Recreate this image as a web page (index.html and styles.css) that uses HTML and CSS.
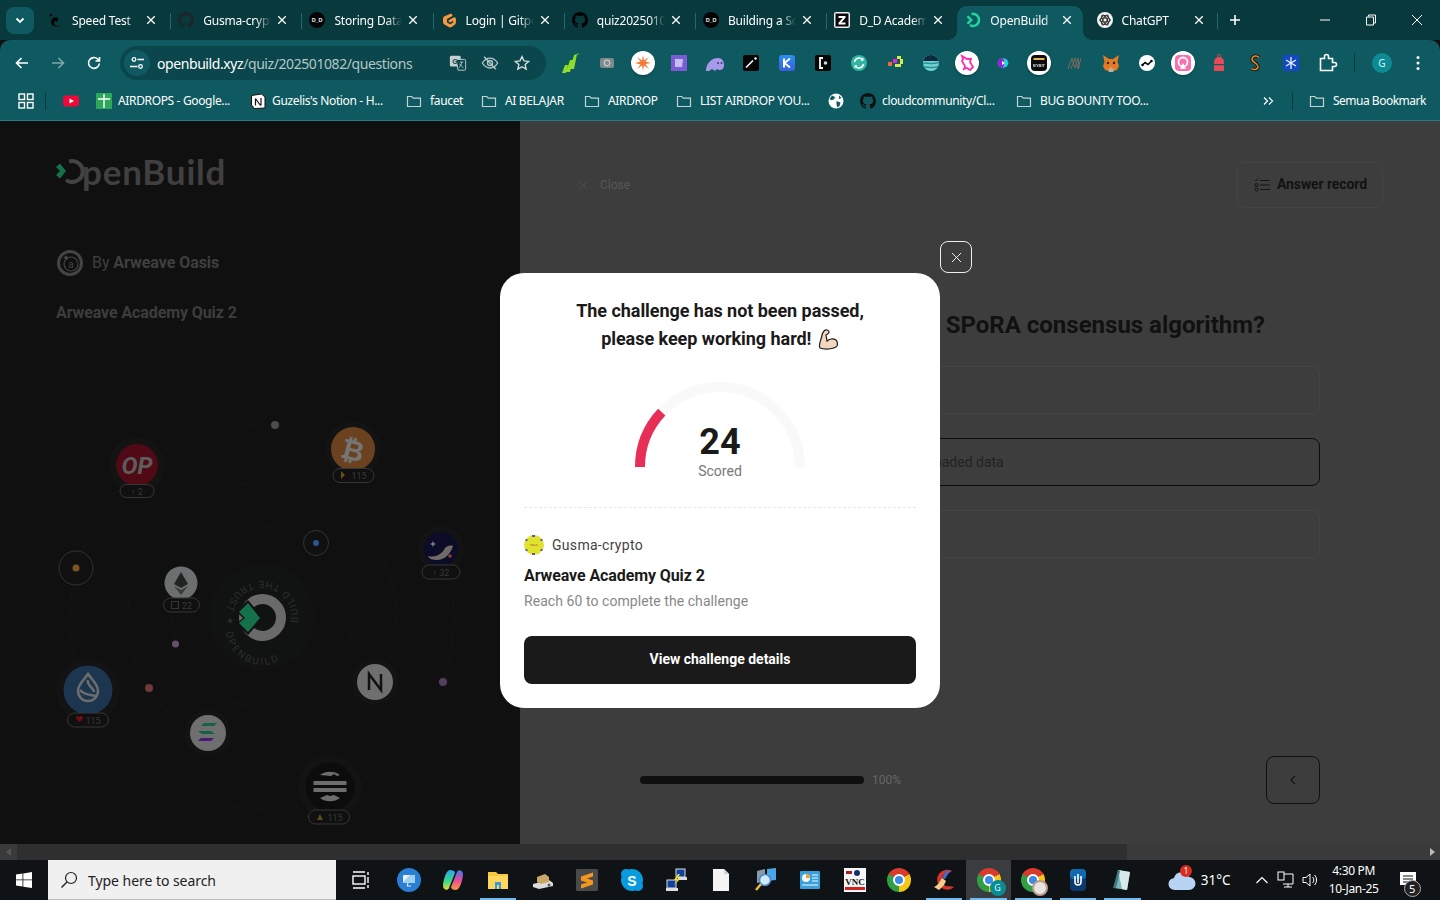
FILE: index.html
```html
<!DOCTYPE html>
<html lang="en">
<head>
<meta charset="utf-8">
<title>OpenBuild</title>
<link rel="stylesheet" href="styles.css">
</head>
<body>
<svg class="defs" width="0" height="0" aria-hidden="true">
  <symbol id="x" viewBox="0 0 12 12"><path d="M1.500 1.500l9 9M10.500 1.500l-9 9" fill="none" stroke="currentColor" stroke-width="1.600"/></symbol>
  <symbol id="xthin" viewBox="0 0 12 12"><path d="M1 1l10 10M11 1L1 11" fill="none" stroke="currentColor" stroke-width="1"/></symbol>
  <symbol id="folder" viewBox="0 0 16 16"><path d="M1.500 3.500h4.200l1.600 1.700h7.200v8.300h-13z" fill="none" stroke="#c4d2d3" stroke-width="1.200"/></symbol>
  <symbol id="gh" viewBox="0 0 16 16"><path fill="currentColor" d="M8 0C3.580 0 0 3.580 0 8c0 3.540 2.290 6.530 5.470 7.590.4.07.55-.17.55-.38 0-.19-.01-.82-.01-1.490-2.010.37-2.530-.49-2.690-.94-.09-.23-.48-.94-.82-1.130-.28-.15-.68-.52-.01-.53.63-.01 1.080.58 1.230.82.72 1.210 1.870.87 2.330.66.07-.52.28-.87.51-1.070-1.780-.2-3.640-.89-3.640-3.950 0-.87.31-1.590.82-2.150-.08-.2-.36-1.020.08-2.120 0 0 .67-.21 2.200.82.64-.18 1.320-.27 2-.27.68 0 1.360.09 2 .27 1.530-1.040 2.200-.82 2.200-.82.44 1.100.16 1.920.08 2.120.51.56.82 1.270.82 2.150 0 3.070-1.870 3.750-3.650 3.950.29.25.54.73.54 1.480 0 1.070-.01 1.930-.01 2.200 0 .21.15.46.55.38A8.013 8.013 0 0016 8c0-4.420-3.580-8-8-8z"/></symbol>
  <symbol id="dd" viewBox="0 0 16 16"><circle cx="8" cy="8" r="8" fill="#050505"/><text x="8" y="10.300" class="ddt">D_D</text></symbol>
  <symbol id="ob" viewBox="0 0 30 26"><path d="M13 3.500a10.500 10.500 0 1 1 -3 18.500" fill="none" stroke="currentColor" stroke-width="4"/><path d="M0 9l4-3.500 6 7.500-6 7.500-4-3.500 4-4z" fill="#14714a"/></symbol>
</svg>

<div class="tabstrip">
  <div class="tabmenu"><svg width="12" height="12" viewBox="0 0 12 12"><path d="M2.500 4.500L6 8l3.500-3.500" fill="none" stroke="#fff" stroke-width="1.800"/></svg></div>
  <div class="tab"><svg class="fav" viewBox="0 0 16 16"><path d="M4 1.500l1.500 1.500-1.500 1.500-1.500-1.500zM9 5C5 6 3.500 9 4.500 12c1 2.500 5 3 9 1.500-3 .5-6 .5-6.500-2C6.500 9 9 8 10 10c2-2 1-5.500-1-5z" fill="#020404"/></svg><span class="tabtitle">Speed Test</span><svg class="tabx"><use href="#x"/></svg></div>
  <div class="tab sep"><svg class="fav favgh dim"><use href="#gh"/></svg><span class="tabtitle">Gusma-crypto</span><svg class="tabx"><use href="#x"/></svg></div>
  <div class="tab sep"><svg class="fav"><use href="#dd"/></svg><span class="tabtitle">Storing Data</span><svg class="tabx"><use href="#x"/></svg></div>
  <div class="tab sep"><svg class="fav" viewBox="0 0 16 16"><path d="M9.500 1.800a1.500 1.500 0 0 1 1.500 2.500L6 7.100v3.400l3.200 1.800 3-1.700V8.800l-2.700 1.500a1.400 1.400 0 0 1-1.400-2.400l4.400-2.500a1.600 1.600 0 0 1 2.400 1.300v3.800a2.900 2.900 0 0 1-1.500 2.500L10.600 15a2.900 2.900 0 0 1-2.900 0l-4.200-2.400A2.900 2.900 0 0 1 2 10V6.700a2.900 2.900 0 0 1 1.500-2.500z" fill="#f79a3e"/></svg><span class="tabtitle">Login | Gitpod</span><svg class="tabx"><use href="#x"/></svg></div>
  <div class="tab sep"><svg class="fav favgh"><use href="#gh"/></svg><span class="tabtitle">quiz202501082</span><svg class="tabx"><use href="#x"/></svg></div>
  <div class="tab sep"><svg class="fav"><use href="#dd"/></svg><span class="tabtitle">Building a Solid</span><svg class="tabx"><use href="#x"/></svg></div>
  <div class="tab sep"><svg class="fav" viewBox="0 0 16 16"><rect width="16" height="16" rx="2" fill="#eee"/><rect x="1.500" y="1.500" width="13" height="13" fill="#0a0a0a"/><path d="M4.500 4h7v1.800L7.300 10.500h4.200V12.500h-7v-1.800l4.200-4.700H4.500z" fill="#fff"/></svg><span class="tabtitle">D_D Academy</span><svg class="tabx"><use href="#x"/></svg></div>
  <div class="tab active"><svg class="fav favob" viewBox="0 0 16 16"><path d="M6.500 2.100a6 6 0 1 1-1.500 11" fill="none" stroke="#22d3a0" stroke-width="2.500"/><path d="M1.500 5l2-1.500L8 8l-4.500 4.500L1.500 11l3-3z" fill="#22d3a0"/></svg><span class="tabtitle">OpenBuild</span><svg class="tabx"><use href="#x"/></svg></div>
  <div class="tab aftersep"><svg class="fav" viewBox="0 0 16 16"><circle cx="8" cy="8" r="8" fill="#f2f2f2"/><g fill="none" stroke="#333" stroke-width="1"><circle cx="8" cy="8" r="4.500"/><ellipse cx="8" cy="8" rx="2" ry="5.500" transform="rotate(30 8 8)"/><ellipse cx="8" cy="8" rx="2" ry="5.500" transform="rotate(-30 8 8)"/><ellipse cx="8" cy="8" rx="5.500" ry="2"/></g></svg><span class="tabtitle">ChatGPT</span><svg class="tabx"><use href="#x"/></svg></div>
  <svg class="newtab" viewBox="0 0 12 12"><path d="M6 1v10M1 6h10" stroke="#fff" stroke-width="1.600"/></svg>
  <div class="winctl">
    <svg class="wbtn" viewBox="0 0 12 12"><path d="M1 6h10" stroke="#fff"/></svg>
    <svg class="wbtn" viewBox="0 0 12 12"><path d="M3.500 2.500V1h7v8H9M1.500 3h7v8h-7z" fill="none" stroke="#fff"/></svg>
    <svg class="wbtn" viewBox="0 0 12 12"><path d="M1 1l10 10M11 1L1 11" stroke="#fff"/></svg>
  </div>
</div>

<div class="toolbar">
  <div class="navs">
    <svg class="nav" viewBox="0 0 16 16"><path d="M14 8H2.500M7.500 3L2.500 8l5 5" fill="none" stroke="#fff" stroke-width="1.600"/></svg>
    <svg class="nav" viewBox="0 0 16 16"><path d="M2 8h11.500M8.500 3l5 5-5 5" fill="none" stroke="#7fa6a9" stroke-width="1.600"/></svg>
    <svg class="nav" viewBox="0 0 16 16"><path d="M13.300 8.500a5.400 5.400 0 1 1-1.500-4.300L13.500 6M13.500 2v4h-4" fill="none" stroke="#fff" stroke-width="1.600"/></svg>
  </div>
  <div class="omni">
    <span class="sitebtn"><svg width="16" height="16" viewBox="0 0 16 16"><g fill="none" stroke="#fff" stroke-width="1.300"><circle cx="5" cy="4.500" r="1.800"/><path d="M8.500 4.500H15M1 11.500h7.500"/><circle cx="11.500" cy="11.500" r="1.800"/></g></svg></span>
    <span class="url">openbuild.xyz<span class="urlpath">/quiz/202501082/questions</span></span>
    <svg class="omnic" viewBox="0 0 20 20"><rect x="1" y="2" width="12" height="12" rx="1.500" fill="#c5d0d1"/><path d="M8 6h9a1.500 1.500 0 0 1 1.500 1.500v9A1.500 1.500 0 0 1 17 18H10z" fill="#0a464b" stroke="#c5d0d1" stroke-width="1"/><text x="3.500" y="11.500" class="gt">G</text><path d="M12 9h4M14 9c0 3-1.500 5-3 6M12 11c1 2 2 3 4 4" stroke="#c5d0d1" stroke-width=".9" fill="none"/></svg>
    <svg class="omnic" viewBox="0 0 20 20"><path d="M1.500 10S5 4.500 10 4.500 18.500 10 18.500 10 15 15.500 10 15.500 1.500 10 1.500 10z" fill="none" stroke="#b5c6c8" stroke-width="1.500"/><circle cx="10" cy="10" r="2.800" fill="none" stroke="#b5c6c8" stroke-width="1.500"/><path d="M3.500 3l13 14" stroke="#b5c6c8" stroke-width="1.600"/></svg>
    <svg class="omnic" viewBox="0 0 20 20"><path d="M10 2.800l2.200 4.800 5.200.6-3.900 3.500 1.100 5.100L10 14.200l-4.600 2.600 1.100-5.100L2.600 8.200l5.200-.6z" fill="none" stroke="#d5e0e1" stroke-width="1.500"/></svg>
  </div>
  <div class="exts">
    <svg class="ext" viewBox="0 0 24 24"><path d="M3 22l3-8 3 0-2 8zM7 21l4-12 3 0-3 12zM11 18l4-14 3-1-3 15zM18 3l2-1-1 2z" fill="#8fdc2a"/></svg>
    <svg class="ext" viewBox="0 0 24 24"><rect x="5" y="7" width="14" height="10" rx="2" fill="#7f8a8c"/><circle cx="12" cy="12" r="2.800" fill="none" stroke="#c4cccd" stroke-width="1.200"/></svg>
    <svg class="ext extbig" viewBox="0 0 24 24"><circle cx="12" cy="12" r="12" fill="#fff"/><path d="M12 4l1 5.500L18 6l-3.500 4.500L20 12l-5.500 1L18 18l-5-3.500L12 20l-1-5.500L6 18l3.500-4.500L4 12l5.500-1.500L6 6l5 3.500z" fill="#f47a3a"/></svg>
    <svg class="ext" viewBox="0 0 24 24"><rect x="4" y="4" width="16" height="16" fill="#7b5cd6"/><path d="M8 8h8l-1 8H8z" fill="#c8bdf0"/></svg>
    <svg class="ext" viewBox="0 0 24 24"><path d="M3 20c0-7 5-13 12-13 4 0 6 3 6 7s-2 5-5 5l-2-1-2 2-3-2-3 2z" fill="#a89ae8"/><circle cx="15" cy="12" r="1" fill="#3d3570"/><circle cx="18.500" cy="12" r="1" fill="#3d3570"/></svg>
    <svg class="ext" viewBox="0 0 24 24"><rect x="4" y="4" width="16" height="16" rx="2" fill="#050505"/><path d="M7 16.500L14 9.500" stroke="#fff" stroke-width="1.600"/><circle cx="16.500" cy="7.500" r="1.200" fill="#fff"/></svg>
    <svg class="ext" viewBox="0 0 24 24"><defs><linearGradient id="kg" x1="0" y1="0" x2="0" y2="1"><stop offset="0" stop-color="#2a8ff0"/><stop offset="1" stop-color="#3a5fe0"/></linearGradient></defs><rect x="4" y="4" width="16" height="16" rx="3" fill="url(#kg)"/><path d="M9 7.500v9M15 7.500L9.500 12l5.500 4.500" fill="none" stroke="#fff" stroke-width="2"/></svg>
    <svg class="ext" viewBox="0 0 24 24"><rect x="4" y="4" width="16" height="16" rx="2" fill="#050505"/><path d="M12 7H9v10h3" fill="none" stroke="#fff" stroke-width="1.800"/><circle cx="14.500" cy="12" r="1.800" fill="#bde3ee"/></svg>
    <svg class="ext" viewBox="0 0 24 24"><circle cx="12" cy="12" r="8" fill="#2fb5a0"/><path d="M7.500 11a4.700 4.700 0 0 1 8-2.500M16.500 13a4.700 4.700 0 0 1-8 2.500" fill="none" stroke="#fff" stroke-width="1.600"/><path d="M16.500 6.500v3.200h-3.200zM7.500 17.500v-3.200h3.200z" fill="#fff"/></svg>
    <svg class="ext" viewBox="0 0 24 24"><path d="M14 5h4v3h-4zM17 8h3v5h-3zM12 13h6v3h-6z" fill="#d7e84a"/><rect x="10" y="8" width="4" height="4" fill="#ee22c8"/><rect x="5" y="11" width="4" height="4" fill="#ef6a3a"/></svg>
    <svg class="ext" viewBox="0 0 24 24"><defs><clipPath id="wc"><circle cx="12" cy="12" r="8"/></clipPath></defs><g clip-path="url(#wc)"><rect x="3" y="3" width="18" height="18" fill="#6fd4d0"/><rect x="3" y="3" width="18" height="7" fill="#0c2a3c"/><path d="M3 13c4-3 8 2 18-2M3 17c4-3 8 2 18-2" stroke="#2d8f9c" stroke-width="1.500" fill="none"/></g></svg>
    <svg class="ext extbig" viewBox="0 0 24 24"><circle cx="12" cy="12" r="12" fill="#fff"/><path d="M7 5l5 3 4 0-1 3 3 5-3 3-3-2-3 1 1-3-3-5 1-2z" fill="none" stroke="#ff2bb0" stroke-width="1.800"/></svg>
    <svg class="ext" viewBox="0 0 24 24"><path d="M12 7l4 1.500 1.500 3.500-1.500 3.500-4 1.500-4-1.500L6.500 12 8 8.500z" fill="#24d3e0"/><path d="M12 7l-4 1.500L6.500 12 8 15.500l4 1.500 1.500-5z" fill="#a01cd8"/><path d="M11 10l3 2-3 2z" fill="#fff"/></svg>
    <svg class="ext extbig" viewBox="0 0 24 24"><circle cx="12" cy="12" r="12" fill="#fff"/><rect x="4" y="4" width="16" height="16" rx="4" fill="#0c0c0c"/><rect x="6.500" y="7" width="11" height="2" fill="#e4b84a"/><text x="12" y="15.500" class="bybit">BYBIT</text></svg>
    <svg class="ext" viewBox="0 0 24 24"><path d="M5 18L9 7l3 10 3-10 1 10M8 18l4-11 3 11 3-11" fill="none" stroke="#7c6a60" stroke-width="1"/></svg>
    <svg class="ext" viewBox="0 0 24 24"><path d="M4 4l6 4h4l6-4-1.500 7 1.500 4-2 4-4 1-2-1-2 1-4-1-2-4 1.500-4z" fill="#e57a24"/><path d="M9 19l3-3 3 3-1 2h-4z" fill="#c0ad9e"/><circle cx="9" cy="12" r="1.200" fill="#24211e"/><circle cx="15" cy="12" r="1.200" fill="#24211e"/></svg>
    <svg class="ext" viewBox="0 0 24 24"><circle cx="12" cy="12" r="8" fill="#fff"/><path d="M7 14.500l3-3 3 2 4-4" fill="none" stroke="#0a0a0a" stroke-width="1.600"/><circle cx="7.500" cy="14" r="1.200"/><circle cx="16.500" cy="10" r="1.200"/></svg>
    <svg class="ext extbig" viewBox="0 0 24 24"><circle cx="12" cy="12" r="12" fill="#fff"/><rect x="4" y="4" width="16" height="16" rx="4" fill="#fb6fb0"/><circle cx="12" cy="11" r="4.500" fill="none" stroke="#fff" stroke-width="1.800"/><path d="M9 18l3-6 3 6z" fill="#fff"/></svg>
    <svg class="ext" viewBox="0 0 24 24"><path d="M7 11a5 5 0 0 1 10 0v9H7z" fill="#e64a58"/><rect x="10.500" y="3.500" width="3" height="3" rx="1" fill="none" stroke="#e64a58"/><rect x="7" y="13" width="10" height="1.200" fill="#0e5a60"/></svg>
    <svg class="ext" viewBox="0 0 24 24"><path d="M16 6.500C14 4 9.500 4.500 9 8c-.5 3 6 4 6 7.500 0 3-4 4-6.500 2" fill="none" stroke="#1a1a1a" stroke-width="3.500"/><path d="M16 6.500C14 4 9.500 4.500 9 8c-.5 3 6 4 6 7.500 0 3-4 4-6.500 2" fill="none" stroke="#ea8a24" stroke-width="1.500"/></svg>
    <svg class="ext" viewBox="0 0 24 24"><rect x="4" y="4" width="16" height="16" fill="#1548c4"/><path d="M12 6v12M7 9l10 6M17 9L7 15" stroke="#e8f4ff" stroke-width="1.300"/></svg>
    <svg class="ext" viewBox="0 0 24 24"><path d="M5.500 7.500h4v-2a2 2 0 0 1 4 0v2h4v4h2a2 2 0 0 1 0 4h-2v4h-12z" fill="none" stroke="#fff" stroke-width="1.600"/></svg>
  </div>
  <span class="tbsep"></span>
  <span class="avatar">G</span>
  <svg class="kebab" viewBox="0 0 4 16"><circle cx="2" cy="2.500" r="1.500" fill="#fff"/><circle cx="2" cy="8" r="1.500" fill="#fff"/><circle cx="2" cy="13.500" r="1.500" fill="#fff"/></svg>
</div>

<div class="bookmarks">
  <svg class="bicon" viewBox="0 0 16 16"><g fill="none" stroke="#fff" stroke-width="1.400"><rect x="1" y="1" width="5.500" height="5.500"/><rect x="9.500" y="1" width="5.500" height="5.500"/><rect x="1" y="9.500" width="5.500" height="5.500"/><rect x="9.500" y="9.500" width="5.500" height="5.500"/></g></svg>
  <span class="bsep"></span>
  <svg class="bicon byt" viewBox="0 0 16 16"><rect y="2.500" width="16" height="11" rx="3" fill="#f0083a"/><path d="M6.500 5.500L11 8l-4.500 2.500z" fill="#fff"/></svg>
  <span class="bm"><svg class="bicon" viewBox="0 0 16 16"><rect width="16" height="16" rx="1" fill="#2da85a"/><path d="M2 6h12M8 1v14" stroke="#fff" stroke-width="1.400"/></svg>AIRDROPS - Google...</span>
  <span class="bm"><svg class="bicon" viewBox="0 0 16 16"><path d="M1.500 2.500L11.500 1 15 4v11L4.500 15.500 1.500 12z" fill="#fff" stroke="#111"/><path d="M5.500 5.500v7M5.500 5.500l5 7M11 5v7.500" stroke="#111" stroke-width="1.200" fill="none"/></svg>Guzelis's Notion - H...</span>
  <span class="bm bmf"><svg class="bicon"><use href="#folder"/></svg>faucet</span>
  <span class="bm bmf"><svg class="bicon"><use href="#folder"/></svg>AI BELAJAR</span>
  <span class="bm bmf"><svg class="bicon"><use href="#folder"/></svg>AIRDROP</span>
  <span class="bm bmf"><svg class="bicon"><use href="#folder"/></svg>LIST AIRDROP YOU...</span>
  <svg class="bicon" viewBox="0 0 16 16"><circle cx="8" cy="8" r="7.500" fill="#fff"/><path d="M4 2.500l3 1.500-1 2.500-3 .5-1.500-1zM8.500 8l4 1.500-1 3.500-2 1.500-1-3zM11 2.500l2.500 2.500-2.500 1z" fill="#0e5a60"/></svg>
  <span class="bm"><svg class="bicon bgh"><use href="#gh"/></svg>cloudcommunity/Cl...</span>
  <span class="bm bmf"><svg class="bicon"><use href="#folder"/></svg>BUG BOUNTY TOO...</span>
  <svg class="bicon bmore" viewBox="0 0 12 12"><path d="M2 2.500L5.500 6 2 9.500M7 2.500L10.500 6 7 9.500" fill="none" stroke="#fff" stroke-width="1.200"/></svg>
  <span class="bsep"></span>
  <span class="bm bmf bmlast"><svg class="bicon"><use href="#folder"/></svg>Semua Bookmark</span>
</div>

<div class="viewport">
  <aside class="panel">
    <div class="logo"><svg class="logomark"><use href="#ob"/></svg><span class="logotext">penBuild</span></div>
    <div class="by">
      <svg class="bylogo" viewBox="0 0 26 26"><circle cx="13" cy="13" r="11.500" fill="none" stroke="#444" stroke-width="3"/><circle cx="14" cy="14" r="7" fill="none" stroke="#444" stroke-width="1.200"/><text x="14" y="18" class="bya">a</text><path d="M6 8l4-3 1 5z" fill="#444"/></svg>
      <span>By <b>Arweave Oasis</b></span>
    </div>
    <div class="quizname">Arweave Academy Quiz 2</div>
    <svg class="orbit" viewBox="0 400 520 444" width="520" height="444">
      <defs>
        <path id="ring" d="M35.500 6A36 36 0 1 0 -35.500 6A36 36 0 1 0 35.500 6"/>
      </defs>
      <g class="orbits">
        <circle cx="262" cy="617" r="90"/><circle cx="262" cy="617" r="134"/><circle cx="262" cy="617" r="192"/>
      </g>
      <circle cx="262" cy="617" r="53" class="glow"/>
      <g transform="translate(262 617)"><text class="ringtext"><textPath href="#ring">BUILD THE TRUST ✦ OPENBUILD</textPath></text></g>
      <circle cx="262.500" cy="617.500" r="18.500" fill="none" stroke="#6a6a6a" stroke-width="10"/>
      <path d="M236 611l12-11 15 18-15 17-12-11 7-6z" fill="#121212"/>
      <path d="M239 612l9-9 12 15-12 14-9-9 6-5z" fill="#14714a"/>

      <circle cx="275" cy="425" r="4" fill="#4c4c4c"/>

      <circle cx="137" cy="465" r="28" class="halo"/><circle cx="137" cy="465" r="21" fill="#4f0a16"/>
      <text x="137" y="474" class="op">OP</text>
      <g class="pill"><rect x="120" y="484.500" width="34" height="13" rx="6.500"/><text x="137" y="495">↑ 2</text></g>

      <circle cx="353" cy="449" r="28" class="halo"/><circle cx="353" cy="449" r="22" fill="#6a4220"/>
      <text x="353" y="460" class="btc" transform="rotate(14 353 449)">₿</text>
      <g class="pill"><rect x="333" y="468.500" width="41" height="14" rx="7"/><path d="M341 471l4 4-4 4z" fill="#6a4a1a"/><text x="359" y="479">115</text></g>

      <circle cx="76" cy="568" r="17" fill="none" stroke="#333"/><circle cx="76" cy="568" r="3.500" fill="#7c5420"/>
      <circle cx="181" cy="583" r="16.500" fill="#6b6f70"/>
      <path d="M181 572l-7 12 7 4 7-4z" fill="#222"/><path d="M174 586l7 9 7-9-7 4z" fill="#3c3c3c"/>
      <g class="pill"><rect x="163.500" y="598" width="36" height="14" rx="7"/><rect x="171.500" y="601.500" width="7" height="7" fill="#6a2a18"/><text x="187" y="609">22</text></g>

      <circle cx="316" cy="543" r="12.500" fill="none" stroke="#333"/><circle cx="316" cy="543" r="3" fill="#2a5590"/>

      <circle cx="441" cy="549" r="23" class="halo"/><circle cx="441" cy="549" r="17" fill="#0c0c28"/>
      <path d="M428 556c8 2 14-2 17-8 2-2 5-3 8-2-2 7-8 14-16 14-4 0-8-1-9-4z" fill="#706a68"/><circle cx="450" cy="556" r="1.800" fill="#8a4238"/><path d="M433 541l1 2 2 1-2 1-1 2-1-2-2-1 2-1z" fill="#777"/>
      <g class="pill"><rect x="422" y="565" width="38" height="14" rx="7"/><text x="441" y="576">↑ 32</text></g>

      <circle cx="88" cy="690" r="32" class="halo"/><circle cx="88" cy="690" r="24.500" fill="#1c3650"/>
      <path d="M88 674c4 6 10 10 10 17a10 10 0 0 1-20 0c0-7 6-11 10-17z M80 690c4 5 10 5 16 6M88 680c-2 5 6 8 6 12" fill="none" stroke="#6d6d6d" stroke-width="2.500"/>
      <g class="pill"><rect x="67.500" y="713" width="41" height="14" rx="7"/><path d="M76 717a2 2 0 0 1 3.500 0 2 2 0 0 1 3.500 0c0 2-2 4-3.500 5-1.500-1-3.500-3-3.500-5z" fill="#6a0f14"/><text x="93" y="724">115</text></g>

      <circle cx="149" cy="688" r="4" fill="#6e3b3b"/>
      <circle cx="175.500" cy="644" r="3.500" fill="#64506c"/>
      <circle cx="443" cy="682" r="4" fill="#54405e"/>

      <circle cx="375" cy="682" r="23" class="halo"/><circle cx="375" cy="682" r="18" fill="#6f6f6f"/>
      <path d="M369 690v-16l12 16v-16" fill="none" stroke="#111" stroke-width="2.500"/>

      <circle cx="208" cy="733" r="23" class="halo"/><circle cx="208" cy="733" r="18" fill="#6f6f6f"/>
      <path d="M201 726h13l3-3h-13zM198 731h13l4 3h-13z" fill="#14604a"/><path d="M198 741h13l3-3h-13z" fill="#4a1a70"/>

      <circle cx="330" cy="787" r="32" class="halo"/><circle cx="330" cy="787" r="24.500" fill="#0c0c0c"/>
      <g fill="#6d6d6d"><path d="M320 775a17 17 0 0 1 20 0l-3 1-3-2-3 2z"/><rect x="313.500" y="781" width="33" height="4"/><rect x="313.500" y="788" width="33" height="4"/><path d="M320 798a17 17 0 0 0 20 0l-6-3-4 1-3-1z"/></g>
      <g class="pill"><rect x="308.500" y="810" width="41" height="14" rx="7"/><path d="M317 820l3-6 3 6z" fill="#5a4a14"/><text x="335" y="821">115</text></g>
    </svg>
  </aside>

  <main class="main">
    <div class="mainhead">
      <span class="closelink"><svg class="closex"><use href="#xthin"/></svg>Close</span>
      <button class="record"><svg class="recicon" viewBox="0 0 16 16"><g fill="none" stroke="#141414" stroke-width="1"><path d="M6 3.500h10M6 8h10M6 12.500h10"/><circle cx="2.500" cy="8" r="1.500"/><circle cx="2.500" cy="12.500" r="1.500"/><path d="M1 3l1 1 2-2.500"/></g></svg>Answer record</button>
    </div>
    <h1 class="question">What is the main purpose of the SPoRA consensus algorithm?</h1>
    <div class="options">
      <div class="option">To reward miners for storage</div>
      <div class="option selected">To incentivize faster access to randomly selected uploaded data</div>
      <div class="option">To reduce the network fees</div>
    </div>
    <div class="mainfoot">
      <div class="progress"><span class="bar"></span><span class="pct">100%</span></div>
      <button class="back"><svg width="10" height="10" viewBox="0 0 10 10"><path d="M7 1L3 5l4 4" fill="none" stroke="#141414" stroke-width="1.200"/></svg></button>
    </div>
  </main>

  <section class="modal">
    <button class="modalclose"><svg class="mx"><use href="#xthin"/></svg></button>
    <h2 class="mtitle">The challenge has not been passed,<br>please keep working hard! <svg class="arm" viewBox="0 0 22 22"><path d="M3 20c-1.500-2 0-6 1-9 1-3 1-6 3-8 2-2 5-1 5 1 0 2-2 2-3 3l1 6c2-2 6-3 9-1 2 2 2 6 0 7-3 2-11 3-16 1z" fill="#f4d5bf" stroke="#1b1b1b" stroke-width="1.200"/></svg></h2>
    <div class="gauge">
      <svg width="170" height="85" viewBox="0 0 170 85" class="gaugesvg">
        <path d="M5 85A80 80 0 0 1 165 85" fill="none" stroke="#f9f9f9" stroke-width="10"/>
        <path d="M5 85A80 80 0 0 1 165 85" fill="none" stroke="#e62e56" stroke-width="10" stroke-dasharray="60.300 300"/>
      </svg>
      <div class="score"><b>24</b><span>Scored</span></div>
    </div>
    <div class="who"><svg class="mava" viewBox="0 0 20 20"><circle cx="10" cy="10" r="10" fill="#dfe32c"/><g fill="#6a4fc0"><rect x="8" y="0" width="3" height="2"/><rect x="1.500" y="4" width="2" height="2"/><rect x="16.500" y="4" width="2" height="2"/><rect x="1.500" y="14" width="2" height="2"/><rect x="16.500" y="14" width="2" height="2"/><rect x="8" y="18" width="3" height="2"/></g><path d="M6 10h1.500l1-1 1 2 1-1H14" stroke="#c0503a" stroke-width=".7" fill="none"/></svg><span>Gusma-crypto</span></div>
    <div class="mname">Arweave Academy Quiz 2</div>
    <div class="mreach">Reach 60 to complete the challenge</div>
    <button class="mbtn">View challenge details</button>
  </section>
</div>

<div class="scrollbar">
  <span class="sbtn"><svg width="6" height="8" viewBox="0 0 6 8"><path d="M5 0v8L0 4z" fill="#555"/></svg></span>
  <span class="thumb"></span>
  <span class="sbtn"><svg width="6" height="8" viewBox="0 0 6 8"><path d="M1 0v8l5-4z" fill="#bbb"/></svg></span>
</div>

<div class="taskbar">
  <svg class="start" viewBox="0 0 16 16"><path d="M0 2.400l6.500-.9v6H0zM7.300 1.400L16 0v7.500H7.300zM0 8.300h6.500v6.200L0 13.600zM7.300 8.300H16V16l-8.700-1.300z" fill="#fff"/></svg>
  <div class="search"><svg class="mag" viewBox="0 0 18 18"><circle cx="11" cy="7" r="5.500" fill="none" stroke="#222" stroke-width="1.200"/><path d="M7 11l-5.500 5.500" stroke="#222" stroke-width="1.400"/></svg><span>Type here to search</span></div>
  <div class="tasks">
    <span class="task taskview"><svg class="ti" viewBox="0 0 24 24"><g fill="none" stroke="#fff" stroke-width="1.400"><rect x="5" y="8" width="12" height="8"/><path d="M5 4h12M5 20h12M20 4v3M20 9v6M20 17v3"/></g></svg></span>
    <span class="task"><svg class="ti" viewBox="0 0 24 24"><circle cx="12" cy="12" r="12" fill="#2a7fd4"/><rect x="6" y="7" width="12" height="8" rx="1" fill="#e8f2fb"/><path d="M11 15l-1 3h4" stroke="#e8f2fb" fill="none"/><path d="M6 14l7-7h5v8H6z" fill="#9fd0f2"/></svg></span>
    <span class="task"><svg class="ti" viewBox="0 0 24 24"><defs><linearGradient id="cpa" x1="0" y1="0" x2="0" y2="1"><stop offset="0" stop-color="#2aa6ee"/><stop offset=".6" stop-color="#3ddc84"/><stop offset="1" stop-color="#f5d23a"/></linearGradient><linearGradient id="cpb" x1="0" y1="0" x2="0" y2="1"><stop offset="0" stop-color="#3a7af0"/><stop offset=".5" stop-color="#e84aa0"/><stop offset="1" stop-color="#f59a3a"/></linearGradient></defs><path d="M9 2c3 0 5 1 5 3L8 20c-1 3-6 2-6-2 0-5 3-16 7-16z" fill="url(#cpa)"/><path d="M15 22c-3 0-5-1-5-3l6-15c1-3 6-2 6 2 0 5-3 16-7 16z" fill="url(#cpb)"/></svg></span>
    <span class="task"><svg class="ti" viewBox="0 0 24 24"><path d="M2 4h8l2 2h10v15H2z" fill="#f9c83c"/><rect x="2" y="8" width="20" height="13" fill="#fcd65f"/><path d="M9 21v-7h6v7h-2v-4h-2v4z" fill="#3a97d8"/></svg><i class="run"></i></span>
    <span class="task"><svg class="ti" viewBox="0 0 24 24"><path d="M2 16l16-4 4 3v3l-14 3-6-2z" fill="#ddd"/><path d="M6 9l8-3 4 3v5l-8 2-4-2z" fill="#c8a96a"/><circle cx="18" cy="17" r="1.500" fill="#555"/></svg></span>
    <span class="task"><svg class="ti" viewBox="0 0 24 24"><rect x="1" y="1" width="22" height="22" rx="1" fill="#4a4a4a"/><path d="M18 4.500v4L6 12.500v-4zM6 8.500l12 4v4l-12-4zM18 12.500v4l-12 4v-4z" fill="#f5961f"/></svg></span>
    <span class="task"><svg class="ti" viewBox="0 0 24 24"><circle cx="12" cy="12" r="11" fill="#0a9bde"/><circle cx="6" cy="6" r="5" fill="#0a9bde"/><circle cx="18" cy="18" r="5" fill="#0a9bde"/><text x="12" y="18" class="skype">S</text></svg></span>
    <span class="task"><svg class="ti" viewBox="0 0 24 24"><rect x="12" y="1" width="9" height="8" fill="#1040a0" stroke="#ddd"/><rect x="3" y="12" width="9" height="8" fill="#1040a0" stroke="#ddd"/><rect x="2" y="20" width="12" height="3" fill="#ddd"/><rect x="14" y="9" width="9" height="3" fill="#ddd"/><path d="M14 6l-4 6h3l-3 5 6-6h-3l3-5z" fill="#f5e02a"/></svg></span>
    <span class="task"><svg class="ti" viewBox="0 0 24 24"><path d="M4 1h11l5 5v17H4z" fill="#f4f4f4"/><path d="M15 1v5h5z" fill="#d0d0d0"/></svg></span>
    <span class="task"><svg class="ti" viewBox="0 0 24 24"><path d="M3 3l8-2v12l-8 2z" fill="#8a9aa8"/><path d="M13 1l9-1v12l-9 1z" fill="#4aa6e8"/><circle cx="11" cy="12" r="5.500" fill="#cfeafc" stroke="#4a88c8" stroke-width="1.500"/><path d="M7 16l-5 6" stroke="#e8b84a" stroke-width="2.500"/></svg></span>
    <span class="task"><svg class="ti" viewBox="0 0 24 24"><rect x="2" y="3" width="20" height="18" rx="1" fill="#3aa0dc"/><circle cx="8" cy="10" r="4" fill="#f4f8fb"/><path d="M8 10V6a4 4 0 0 1 4 4z" fill="#f0a030"/><path d="M14 7h6M14 10h6M14 13h6M4 17h16" stroke="#f4f8fb"/></svg></span>
    <span class="task"><svg class="ti" viewBox="0 0 24 24"><rect x="1" y="0" width="22" height="24" fill="#f6f6f6"/><ellipse cx="14" cy="5" rx="3" ry="3" fill="#14306a"/><path d="M3 3h6v3H3z" fill="#a02020"/><text x="12" y="17" class="vnc">VNC</text><rect x="2" y="19" width="20" height="3" fill="#d02020"/></svg></span>
    <span class="task"><i class="chrome"></i></span>
    <span class="task"><svg class="ti" viewBox="0 0 24 24"><path d="M20 3a10 10 0 1 0 2 16l-5-1c-3 1-7-1-7-6s3-7 7-7z" fill="#d8352a"/><path d="M15 2l3 1-5 8-3-1z" fill="#3a70d8"/><path d="M10 10l4 3-2 4-5 5-5-3c3-1 6-5 8-9z" fill="#f2d08a"/></svg><i class="run"></i></span>
    <span class="task activetask"><i class="chrome"><em class="cbadge">G</em></i><i class="run"></i></span>
    <span class="task"><i class="chrome"><em class="cbadge2"></em></i><i class="run"></i></span>
    <span class="task"><svg class="ti" viewBox="0 0 24 24"><rect x="4" y="1" width="16" height="22" rx="4" fill="#0c3a70"/><rect x="4" y="1" width="16" height="10" rx="4" fill="#0f6ab0"/><path d="M9 8v6a3 3 0 0 0 6 0V8M12 6v9" fill="none" stroke="#fff" stroke-width="1.600"/></svg><i class="run"></i></span>
    <span class="task"><svg class="ti" viewBox="0 0 24 24"><path d="M8 2l12 2-3 18-13-2z" fill="#7fb4b8"/><path d="M8 2l12 2-3 18-5-1z" fill="#d8eaec"/><path d="M3 20L8 2l2 1-4 17z" fill="#3a7a80"/></svg><i class="run"></i></span>
  </div>
  <div class="tray">
    <span class="weather"><svg class="cloud" viewBox="0 0 28 26"><path d="M7 25a6 6 0 0 1-1-12 8 8 0 0 1 15-1 6.500 6.500 0 0 1 0 13z" fill="#b8d4f4"/><circle cx="18" cy="6" r="6" fill="#d92c20"/><text x="18" y="9" class="w1">1</text></svg><span class="temp">31°C</span></span>
    <svg class="trayi chev" viewBox="0 0 14 14"><path d="M1.500 10L7 4.500 12.500 10" fill="none" stroke="#fff" stroke-width="1.200"/></svg>
    <svg class="trayi tnet" viewBox="0 0 18 18"><g fill="none" stroke="#fff"><rect x="1" y="1" width="6" height="8"/><path d="M7 3h9v10H6M11 13v3M7 16h8"/></g></svg>
    <svg class="trayi tvol" viewBox="0 0 18 18"><g fill="none" stroke="#fff"><path d="M2 6.500h3l4-3.500v12l-4-3.500H2zM11.500 6a4 4 0 0 1 0 6M13.500 4a7 7 0 0 1 0 10"/></g></svg>
    <div class="clock"><span>4:30 PM</span><span>10-Jan-25</span></div>
    <span class="notif"><svg class="trayi" viewBox="0 0 18 18"><path d="M1 1h16v13h-6l-2 3v-3H1z" fill="#fff"/><path d="M4 5h10M4 8h10M4 11h6" stroke="#111"/></svg><i class="nbadge">5</i></span>
  </div>
</div>
</body>
</html>
```

FILE: styles.css
```css
* { box-sizing: border-box; }
html, body { margin: 0; height: 100%; overflow: hidden; }
body { width: 1440px; height: 900px; display: flex; flex-direction: column; font-family: "Noto Sans", sans-serif; background: #111; }
.defs { position: absolute; }
button { font: inherit; cursor: pointer; }
.ddt { font: 700 5.500px "Liberation Sans", sans-serif; fill: #eee; text-anchor: middle; }

/* Tab strip */
.tabstrip { height: 40px; flex: none; display: flex; align-items: center; background: #07393d; color: #fff; font-size: 12px; letter-spacing: -.2px; }
.tabmenu { width: 28px; height: 27px; margin: 0 5px 0 6px; border-radius: 8px; background: #0e5a60; display: flex; align-items: center; justify-content: center; }
.tab { position: relative; width: 131.200px; height: 40px; flex: none; display: flex; align-items: center; padding-left: 8px; }
.tab.sep::before, .tab.aftersep::after { content: ""; position: absolute; top: 13px; width: 1px; height: 16px; background: #1d6a70; }
.tab.sep::before { left: 0; }
.tab.aftersep::after { right: 2px; }
.aftersep .tabx { margin-left: 4px; }
.tab.active { background: #0e5a60; height: 34px; margin-top: 6px; width: 126px; margin-right: 5.200px; border-radius: 10px 10px 0 0; padding-bottom: 6px; }
.tab.active::before, .tab.active::after { content: ""; position: absolute; bottom: 0; width: 10px; height: 10px; }
.tab.active::before { left: -10px; background: radial-gradient(circle at 0 0, transparent 10px, #0e5a60 10.500px); }
.tab.active::after { right: -10px; background: radial-gradient(circle at 100% 0, transparent 10px, #0e5a60 10.500px); }
.fav { width: 16px; height: 16px; flex: none; }
.favgh { color: #020404; }
.favgh.dim { color: #1a2628; }
.tabtitle { width: 68px; margin-left: 9px; white-space: nowrap; overflow: hidden; -webkit-mask-image: linear-gradient(90deg, #000 78%, transparent); mask-image: linear-gradient(90deg, #000 78%, transparent); }
.tabx { width: 10px; height: 10px; margin-left: 6px; color: #fff; flex: none; }
.active .tabx { margin-left: 4px; }
.newtab { width: 12px; height: 12px; margin-left: 9px; flex: none; }
.winctl { margin-left: auto; display: flex; align-items: center; gap: 34px; padding-right: 17px; }
.wbtn { width: 12px; height: 12px; }

/* Toolbar */
.toolbar { height: 44px; flex: none; display: flex; align-items: center; padding-top: 2px; background: #0e5a60; border-radius: 10px 10px 0 0; }
.navs { display: flex; gap: 20px; padding-left: 14px; width: 120px; flex: none; }
.nav { width: 16px; height: 16px; }
.omni { width: 426px; height: 34px; flex: none; border-radius: 17px; background: #0a464b; display: flex; align-items: center; padding-left: 4px; color: #fff; }
.sitebtn { width: 26px; height: 26px; border-radius: 13px; background: #0e5a60; display: flex; align-items: center; justify-content: center; flex: none; }
.url { margin-left: 7px; width: 292px; font-size: 14px; letter-spacing: -.42px; white-space: nowrap; flex: none; }
.urlpath { color: #b3c6c8; }
.omnic { width: 18px; height: 18px; flex: none; margin-right: 14px; }
.gt { font: bold 8px "Liberation Sans", sans-serif; fill: #0a464b; }
.exts { display: flex; margin-left: 7px; flex: none; }
.ext { width: 24px; height: 24px; margin: 0 6px; flex: none; }
.extbig { filter: drop-shadow(0 1px 1px rgba(0,0,0,.3)); }
.bybit { font: bold 4px "Liberation Sans", sans-serif; fill: #ddd; text-anchor: middle; }
.tbsep { width: 1px; height: 20px; margin-left: 9px; background: #07393d; flex: none; }
.avatar { width: 20px; height: 20px; margin-left: 17px; border-radius: 50%; background: #0e8a94; color: #cfe; font-size: 10px; display: flex; align-items: center; justify-content: center; flex: none; }
.kebab { width: 4px; height: 16px; margin-left: 24px; flex: none; }

/* Bookmarks */
.bookmarks { height: 37px; flex: none; padding: 0 0 3px 18px; background: #0e5a60; border-bottom: 1px solid #2b7a80; color: #fff; font-size: 12px; letter-spacing: -.35px; display: grid; align-items: center; grid-template-columns: 27px 15px 36px 154px 156px 75px 103px 92px 152px 32px 156px 244px 32px 17px 131px; }
.bicon { width: 16px; height: 16px; flex: none; }
.bookmarks > svg.bicon { display: block; }
.byt { margin-left: 3px; }
.bookmarks > svg.bmore { width: 12px; height: 12px; margin-left: 2px; }
.bsep { width: 1px; height: 18px; background: #07393d; }
.bm { display: flex; align-items: center; gap: 6px; white-space: nowrap; }
.bmf { gap: 8px; }
.bmlast { letter-spacing: -.5px; }
.bm .bgh { color: #111; }

/* Viewport */
.viewport { position: relative; flex: 1; min-height: 0; display: flex; font-family: Roboto, sans-serif; background: #3d3d3d; }
.panel { width: 520px; flex: none; background: #101010; display: flex; flex-direction: column; padding: 33px 0 0 56px; color: #3f3f3f; }
.logo { display: flex; align-items: center; height: 34px; }
.logomark { width: 30px; height: 26px; color: #434343; flex: none; }
.logotext { font: 700 35px/34px Lato, sans-serif; letter-spacing: .8px; color: #404040; margin-left: -4px; }
.by { display: flex; align-items: center; gap: 9px; margin-top: 61px; font-size: 16px; height: 26px; letter-spacing: -.05px; }
.by b { font-weight: 700; }
.bylogo { width: 26px; height: 26px; flex: none; margin-left: 1px; margin-top: 1px; }
.bya { font: 10px Roboto, sans-serif; fill: #444; text-anchor: middle; }
.quizname { margin-top: 26px; font-size: 16px; font-weight: 700; line-height: 24px; color: #3d3d3d; letter-spacing: -.1px; }
.orbit { margin: auto 0 0 -56px; display: block; flex: none; }
.orbits circle { fill: none; stroke: #1a1a1a; stroke-dasharray: 2 3; }
.glow { fill: #101311; }
.halo { fill: #131313; }
.ringtext { font: 10px Roboto, sans-serif; letter-spacing: 2.200px; fill: #2e2e2e; }
.op { font: italic 700 24px Roboto, sans-serif; fill: #5d5d5d; text-anchor: middle; }
.btc { font: 700 28px "DejaVu Sans", sans-serif; fill: #757575; text-anchor: middle; }
.pill rect { fill: #101010; stroke: #363636; }
.pill text { font: 9px Roboto, sans-serif; fill: #383838; text-anchor: middle; }

.main { flex: 1; display: flex; flex-direction: column; padding: 41px 57px 40px 59px; color: #0d0d0d; min-width: 0; }
.mainhead { display: flex; align-items: center; justify-content: space-between; height: 46px; }
.closelink { display: flex; align-items: center; gap: 12px; font-size: 12px; color: #575757; }
.closex { width: 9px; height: 9px; color: #575757; }
.record { width: 146px; height: 46px; display: flex; align-items: center; gap: 7px; padding: 0 0 2px 16px; background: transparent; border: 1px solid #444; border-radius: 8px; font: 700 14px Roboto, sans-serif; letter-spacing: -.1px; color: #121212; }
.recicon { width: 16px; height: 16px; flex: none; margin-top: 2px; }
.question { margin: 101px 118px 0 0; font-size: 24px; line-height: 32px; font-weight: 700; text-align: right; color: #111; white-space: nowrap; }
.options { margin: 25px 63px 0 1px; display: flex; flex-direction: column; gap: 24px; }
.option { height: 48px; border: 1px solid #444; border-radius: 8px; padding: 0 24px; font-size: 14px; line-height: 46px; color: #222; white-space: nowrap; }
.option.selected { border-color: #0c0c0c; }
.mainfoot { margin: auto 63px 0 61px; display: flex; align-items: center; justify-content: space-between; }
.progress { display: flex; align-items: center; gap: 8px; font-size: 12px; color: #666; }
.bar { width: 224px; height: 8px; border-radius: 4px; background: #0f0f0f; }
.back { width: 54px; height: 48px; background: transparent; border: 1px solid #111; border-radius: 8px; display: flex; align-items: center; justify-content: center; padding: 0; }

/* Modal */
.modal { position: absolute; left: 500px; top: 152px; width: 440px; height: 435px; background: #fff; border-radius: 24px; padding: 24px; color: #1a1a1a; }
.modalclose { position: absolute; right: -32px; top: -32px; width: 32px; height: 32px; border: 1px solid #eee; border-radius: 8px; background: transparent; padding: 0; display: flex; align-items: center; justify-content: center; }
.mx { width: 11px; height: 11px; color: #fff; }
.mtitle { margin: 0; font-size: 18px; line-height: 28px; font-weight: 700; text-align: center; letter-spacing: -.05px; }
.arm { width: 22px; height: 22px; vertical-align: -5px; margin-left: 1px; }
.gauge { position: relative; height: 126px; margin-top: 29px; display: flex; justify-content: center; border-bottom: 1px dashed #e6e6e6; }
.gaugesvg { display: block; }
.score { position: absolute; left: 0; right: 0; top: 39px; display: flex; flex-direction: column; align-items: center; }
.score b { font-size: 36px; line-height: 42px; font-weight: 700; }
.score span { font-size: 14px; line-height: 20px; color: #777; margin-top: -2px; }
.who { margin-top: 27px; display: flex; align-items: center; gap: 8px; font-size: 14px; line-height: 20px; color: #444; letter-spacing: .3px; }
.mava { width: 20px; height: 20px; flex: none; }
.mname { margin-top: 9px; font-size: 16px; line-height: 24px; font-weight: 700; letter-spacing: -.1px; }
.mreach { margin-top: 2px; font-size: 14px; line-height: 22px; color: #888; letter-spacing: .06px; }
.mbtn { display: block; width: 100%; height: 48px; margin-top: 24px; padding: 0 0 2px; background: #1a1a1a; color: #fff; border: 0; border-radius: 8px; font: 700 14px Roboto, sans-serif; }

/* Scrollbar */
.scrollbar { height: 16px; flex: none; background: #3a3a3a; display: flex; align-items: center; }
.sbtn { width: 17px; height: 16px; display: flex; align-items: center; justify-content: center; flex: none; }
.thumb { width: 1110px; height: 16px; background: #2f2f2f; margin-right: auto; }

/* Taskbar */
.taskbar { height: 40px; flex: none; background: #101315; color: #fff; display: flex; align-items: center; }
.start { width: 16px; height: 16px; margin: 0 16px 0 16px; flex: none; }
.search { width: 288px; height: 40px; flex: none; background: #f0f0f0; color: #222; font-size: 14px; letter-spacing: -.05px; display: flex; align-items: center; gap: 10px; padding: 1px 0 0 12px; border-bottom: 1px solid #bbb; }
.mag { width: 18px; height: 18px; flex: none; }
.tasks { display: flex; margin-left: 2px; }
.task { position: relative; width: 44.600px; height: 40px; display: flex; align-items: center; justify-content: center; flex: none; }
.taskview { margin-right: 4px; }
.ti { width: 24px; height: 24px; }
.run { position: absolute; left: 4px; right: 4px; bottom: 0; height: 2px; background: #76b9ed; }
.activetask { background: #3a3d3f; }
.chrome { position: relative; display: block; width: 24px; height: 24px; border-radius: 50%; background: conic-gradient(#d93a2e 0 60deg, #f5c518 60deg 180deg, #2f9e44 180deg 300deg, #d93a2e 300deg); }
.chrome::after { content: ""; position: absolute; inset: 6px; border-radius: 50%; background: #3a8ae6; border: 2px solid #fff; }
.cbadge { position: absolute; right: -5px; bottom: -4px; z-index: 1; width: 16px; height: 16px; border-radius: 50%; background: #0a8a94; color: #dff; font: 9px/16px "Noto Sans", sans-serif; text-align: center; }
.cbadge2 { position: absolute; right: -3px; bottom: -4px; z-index: 1; width: 16px; height: 16px; border-radius: 50%; background: #e8e4e0; border: 2px solid #b89a90; }
.skype { font: 700 14px "Liberation Sans", sans-serif; fill: #fff; text-anchor: middle; }
.vnc { font: 700 9px "Liberation Serif", serif; fill: #111; text-anchor: middle; }
.tray { flex: 1; display: flex; align-items: center; min-width: 0; }
.weather { display: flex; align-items: center; margin-left: 23px; gap: 5px; }
.cloud { width: 28px; height: 26px; margin-top: -4px; flex: none; }
.w1 { font: 8px "Noto Sans", sans-serif; fill: #fff; text-anchor: middle; }
.temp { font-size: 13.500px; width: 29px; white-space: nowrap; }
.trayi { width: 18px; height: 18px; flex: none; }
.chev { width: 14px; height: 14px; margin-left: 25px; }
.tnet { margin-left: 8px; }
.tvol { margin-left: 6px; }
.clock { width: 60px; margin-left: 5px; display: flex; flex-direction: column; align-items: center; font-size: 12px; line-height: 18px; letter-spacing: -.3px; }
.notif { position: relative; margin-left: 15px; width: 24px; height: 24px; display: flex; align-items: center; }
.nbadge { position: absolute; right: 2px; bottom: -5px; width: 17px; height: 17px; border-radius: 50%; background: #222; border: 1px solid #aaa; color: #fff; font: 11px/15px "Noto Sans", sans-serif; text-align: center; }
```
